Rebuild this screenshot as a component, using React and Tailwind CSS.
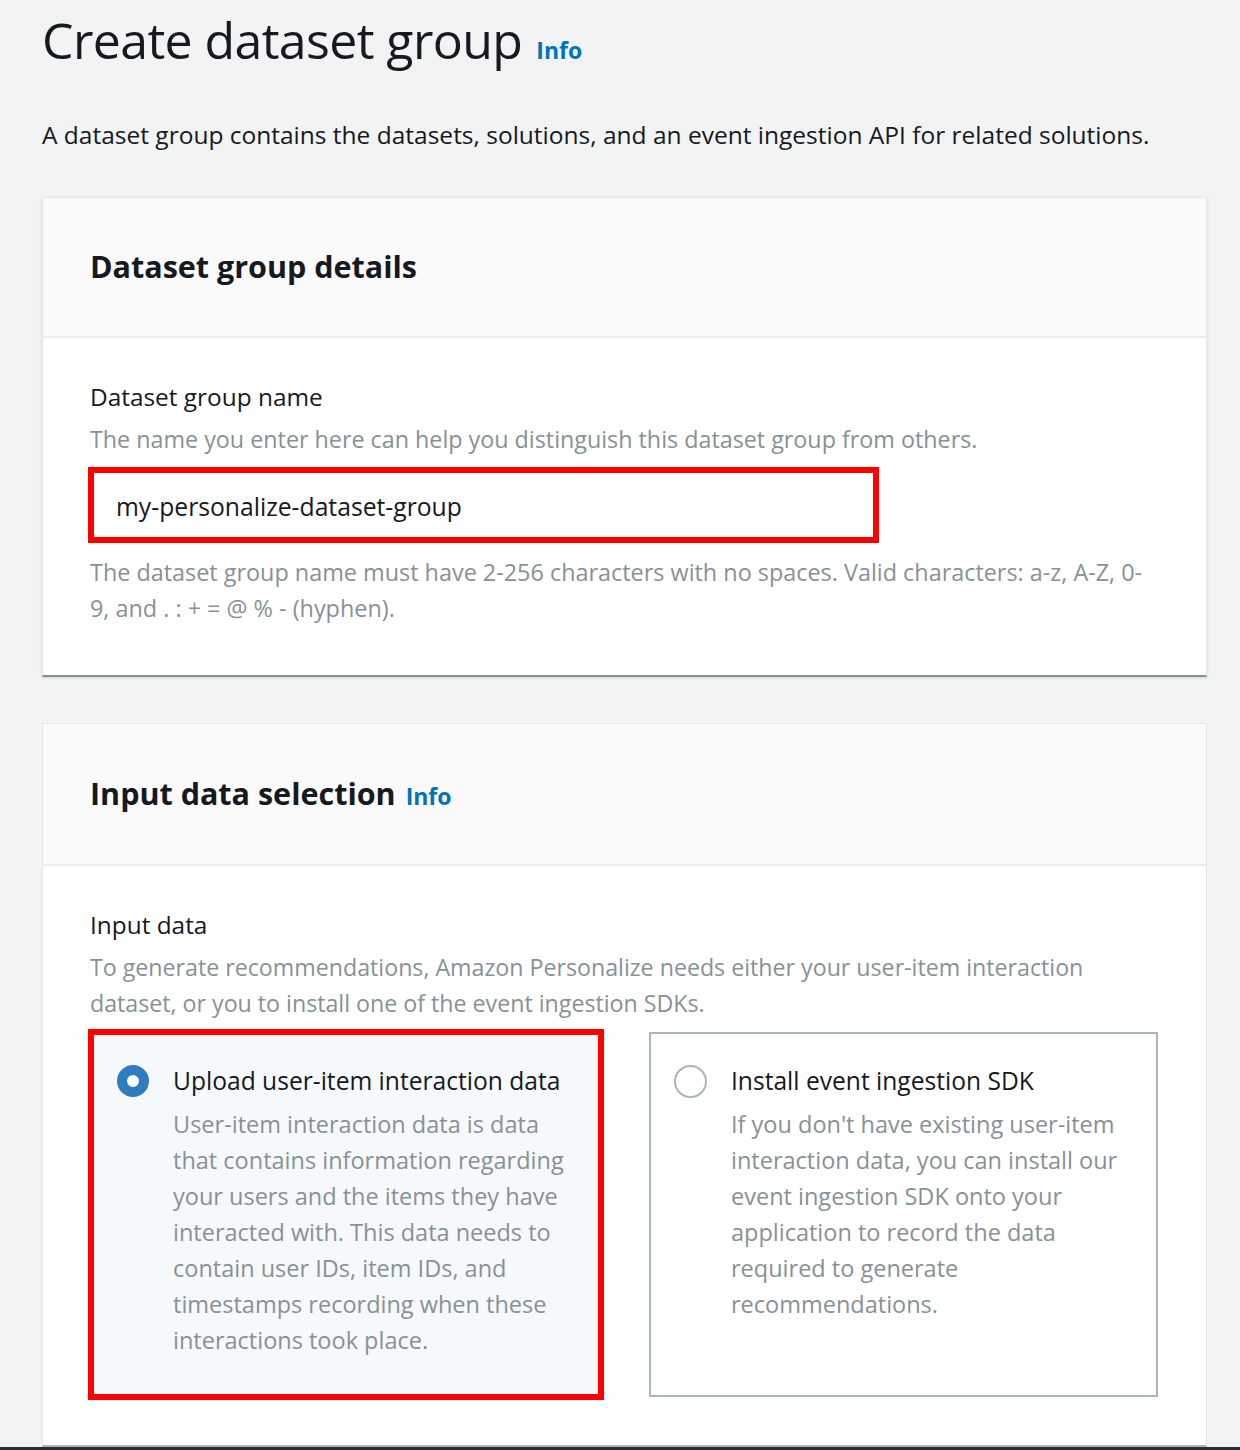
import React from "react";

const FONT = { fontFamily: '"Open Sans", "Noto Sans", Arial, sans-serif' };

const Info = ({ className = "" }) => (
  <span className={`font-bold text-[#0073bb] ${className}`}>Info</span>
);

const RadioCard = ({ selected, title, description }) => (
  <div
    className={`flex gap-[24px] pl-[23px] pr-5 pb-[36px] ${
      selected
        ? "border-[6px] border-[#ff0000] bg-[#f5f9fc] pt-[28px]"
        : "border-2 border-[#aab7b8] bg-white my-[3px] pt-[29px]"
    }`}
  >
    <div className="pt-[2px]">
      {selected ? (
        <div className="w-8 h-8 rounded-full border-[10px] border-[#2f7cbf] bg-white" />
      ) : (
        <div className="w-[33px] h-[33px] rounded-full border-2 border-[#aab7b8] bg-white" />
      )}
    </div>
    <div className="flex-1">
      <div className="text-[24.6px] leading-[36px] text-[#16191f]">{title}</div>
      <div className="text-[23.5px] leading-[36px] text-[#879196] mt-[7px]">
        {description}
      </div>
    </div>
  </div>
);

export default function App() {
  return (
    <div className="bg-[#f2f3f3] min-h-[1450px] px-[42px] pt-[8px] overflow-hidden" style={FONT}>
      <h1 className="flex items-baseline gap-[14px] text-[#16191f]">
        <span className="text-[50px] leading-[64px] font-normal tracking-[-0.6px]">Create dataset group</span>
        <Info className="text-[23px]" />
      </h1>
      <p className="mt-[45px] text-[24.5px] leading-[36px] text-[#16191f] whitespace-nowrap">
        A dataset group contains the datasets, solutions, and an event ingestion API for related solutions.
      </p>

      <section className="mt-[44px] w-[1165px] bg-white border border-[#e4e6e6] border-b-2 border-b-[#879196] shadow-sm">
        <div className="bg-[#fafafa] border-b-2 border-[#eaeded] h-[140px] px-[47px] flex items-center">
          <h2 className="text-[30.5px] font-bold text-[#16191f]">Dataset group details</h2>
        </div>
        <div className="px-[47px] pt-[41px] pb-[49px]">
          <div className="text-[24.4px] leading-[36px] text-[#16191f]">Dataset group name</div>
          <div className="text-[23.3px] leading-[36px] text-[#879196] mt-[6px] whitespace-nowrap">
            The name you enter here can help you distinguish this dataset group from others.
          </div>
          <div className="mt-[10px] -ml-[2px] w-[791px] h-[76px] border-[6px] border-[#ff0000] bg-white flex items-center pl-[22px] pt-[3px]">
            <span className="text-[24.7px] text-[#16191f]">my-personalize-dataset-group</span>
          </div>
          <div className="mt-[11px] text-[23.4px] leading-[36px] text-[#879196] whitespace-nowrap">
            The dataset group name must have 2-256 characters with no spaces. Valid characters: a-z, A-Z, 0-
            <br />
            9, and . : + = @ % - (hyphen).
          </div>
        </div>
      </section>

      <section className="mt-[46px] w-[1165px] bg-white border border-[#e4e6e6] border-b-2 border-b-[#aab7b8]">
        <div className="bg-[#fafafa] border-b-2 border-[#eaeded] h-[142px] px-[47px] flex items-center">
          <h2 className="text-[30.5px] font-bold text-[#16191f] flex items-baseline gap-[10px]">
            Input data selection <Info className="text-[23px]" />
          </h2>
        </div>
        <div className="px-[47px] pt-[41px] pb-[45px]">
          <div className="text-[24.4px] leading-[36px] text-[#16191f]">Input data</div>
          <div className="text-[23.2px] leading-[36px] text-[#879196] mt-[6px] w-[1010px]">
            To generate recommendations, Amazon Personalize needs either your user-item interaction dataset, or you to install one of the event ingestion SDKs.
          </div>
          <div className="mt-[8px] -ml-[2px] grid grid-cols-[516px_509px] gap-[45px] items-stretch">
            <RadioCard
              selected
              title="Upload user-item interaction data"
              description="User-item interaction data is data that contains information regarding your users and the items they have interacted with. This data needs to contain user IDs, item IDs, and timestamps recording when these interactions took place."
            />
            <RadioCard
              title="Install event ingestion SDK"
              description="If you don't have existing user-item interaction data, you can install our event ingestion SDK onto your application to record the data required to generate recommendations."
            />
          </div>
        </div>
      </section>
      <div className="-mx-[42px] h-[20px] bg-[#2a2e33]" />
    </div>
  );
}
